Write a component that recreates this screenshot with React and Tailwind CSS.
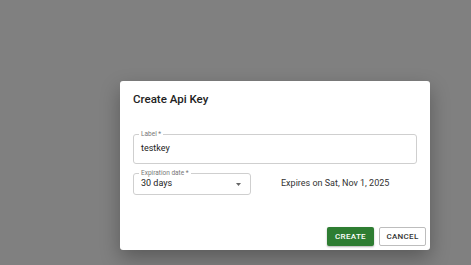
export default function App() {
  return (
    <div className="relative h-[265px] w-[471px] overflow-hidden bg-[#808080] font-['Roboto',sans-serif]">
      <div className="flex pl-[120px] pt-[81px]">
        <div className="flex h-[169px] w-[310px] flex-col rounded-[3px] bg-white shadow-[0_8px_20px_rgba(0,0,0,0.3)]">
          <h2 className="pl-[13px] pt-[10px] text-[11.5px] font-medium leading-[16px] text-[#222]">
            Create Api Key
          </h2>

          <div className="mt-[27px] px-[13px]">
            <div className="relative h-[30px] w-[284px] rounded-[3px] border border-[#cfcfcf]">
              <span className="absolute -top-[5px] left-[5px] bg-white px-[2px] text-[6.5px] leading-[8px] text-[#777]">
                Label *
              </span>
              <div className="flex h-full items-center pl-[7px] text-[9px] text-[#222]">
                testkey
              </div>
            </div>
          </div>

          <div className="mt-[9px] flex items-center px-[13px]">
            <div className="relative flex h-[22px] w-[118px] items-center rounded-[3px] border border-[#cfcfcf] pl-[7px] pr-[9px]">
              <span className="absolute -top-[5px] left-[5px] bg-white px-[2px] text-[6.5px] leading-[8px] text-[#777]">
                Expiration date *
              </span>
              <span className="flex-1 text-[9px] text-[#222]">30 days</span>
              <svg width="5" height="3" viewBox="0 0 5 3">
                <path d="M0 0 L5 0 L2.5 3 Z" fill="#666" />
              </svg>
            </div>
            <div className="ml-[30px] text-[9px] text-[#333]">
              Expires on Sat, Nov 1, 2025
            </div>
          </div>

          <div className="mt-auto flex justify-end gap-[5px] pb-[4px] pr-[4px]">
            <button className="h-[19px] w-[47px] rounded-[2px] bg-[#2e7d32] text-[8px] font-medium tracking-[0.3px] text-white shadow-[0_1px_2px_rgba(0,0,0,0.3)]">
              CREATE
            </button>
            <button className="h-[19px] w-[47px] rounded-[2px] border border-[#bdbdbd] bg-white text-[8px] font-medium tracking-[0.3px] text-[#333]">
              CANCEL
            </button>
          </div>
        </div>
      </div>
    </div>
  );
}
